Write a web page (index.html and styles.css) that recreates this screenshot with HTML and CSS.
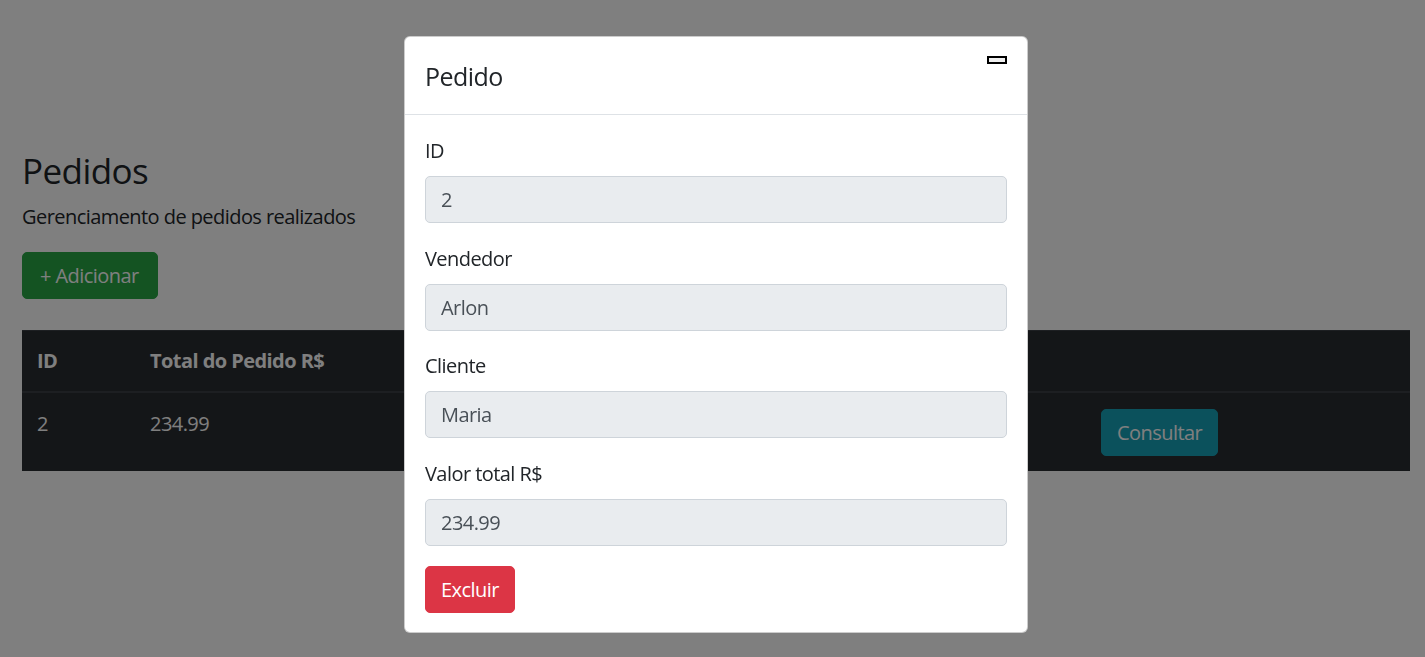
FILE: index.html
```html
<!DOCTYPE html>
<html lang="pt-BR">
<head>
<meta charset="utf-8">
<title>Pedidos</title>
<link rel="stylesheet" href="styles.css">
</head>
<body>
<main class="page">
  <h3 class="page-title">Pedidos</h3>
  <p class="page-sub">Gerenciamento de pedidos realizados</p>
  <div class="actions">
    <button class="btn btn-success" type="button">+ Adicionar</button>
  </div>
  <table class="orders">
    <thead>
      <tr>
        <th class="col-id">ID</th>
        <th class="col-total">Total do Pedido R$</th>
        <th class="col-vend"></th>
        <th class="col-cli"></th>
        <th class="col-act"></th>
      </tr>
    </thead>
    <tbody>
      <tr>
        <td>2</td>
        <td>234.99</td>
        <td></td>
        <td></td>
        <td><button class="btn btn-info" type="button">Consultar</button></td>
      </tr>
    </tbody>
  </table>
</main>

<div class="backdrop"></div>

<div class="modal">
  <div class="modal-content">
    <div class="modal-header">
      <h5 class="modal-title">Pedido</h5>
      <button class="close-box" type="button" aria-label="Fechar"></button>
    </div>
    <div class="modal-body">
      <div class="field">
        <label class="field-label">ID</label>
        <input class="form-control" type="text" value="2" readonly>
      </div>
      <div class="field">
        <label class="field-label">Vendedor</label>
        <input class="form-control" type="text" value="Arlon" readonly>
      </div>
      <div class="field">
        <label class="field-label">Cliente</label>
        <input class="form-control" type="text" value="Maria" readonly>
      </div>
      <div class="field">
        <label class="field-label">Valor total R$</label>
        <input class="form-control" type="text" value="234.99" readonly>
      </div>
      <button class="btn btn-danger" type="button">Excluir</button>
    </div>
  </div>
</div>
</body>
</html>
```

FILE: styles.css
```css
* { box-sizing: border-box; }

html, body {
  margin: 0;
  padding: 0;
}

body {
  font-family: "Open Sans", "Noto Sans", sans-serif;
  font-size: 20px;
  line-height: 1.5;
  letter-spacing: -0.028em;
  color: #212529;
  background: #fff;
  width: 1425px;
  height: 657px;
  overflow: hidden;
}

.page {
  padding: 150px 15px 0 22px;
}

.page-title {
  margin: 0 0 10px;
  font-size: 35px;
  font-weight: 500;
  line-height: 42px;
}

.page-sub {
  margin: 0 0 20px;
}

.actions {
  margin-bottom: 31px;
}

.btn {
  display: inline-block;
  font-family: inherit;
  font-size: 20px;
  letter-spacing: inherit;
  line-height: 30px;
  height: 47px;
  padding: 7.5px 15px;
  border: 1px solid transparent;
  border-radius: 5px;
  color: #fff;
  cursor: pointer;
}

.btn-success {
  background: #28a745;
  border-color: #28a745;
  padding-left: 17px;
  padding-right: 18px;
}
.btn-info { background: #17a2b8; border-color: #17a2b8; }
.btn-danger { background: #dc3545; border-color: #dc3545; }

.orders {
  width: 1388px;
  border-collapse: collapse;
  background: #292c30;
  color: #fff;
  table-layout: fixed;
}

.orders th,
.orders td {
  padding: 15px;
  text-align: left;
  vertical-align: top;
  border-top: 1px solid #3a3f45;
}

.orders td {
  padding-top: 16px;
}

.orders th {
  font-weight: 700;
  border-bottom: 2px solid #3a3f45;
}

.col-id { width: 113px; }
.col-total { width: 320px; }
.col-vend { width: 320px; }
.col-cli { width: 311px; }
.col-act { width: 324px; }

.backdrop {
  position: fixed;
  inset: 0;
  background: rgba(0, 0, 0, 0.5);
}

.modal {
  position: fixed;
  inset: 0;
  padding: 36px 0 0 404px;
}

.modal-content {
  width: 624px;
  background: #fff;
  border: 1px solid rgba(0, 0, 0, 0.2);
  border-radius: 6px;
}

.modal-header {
  display: flex;
  justify-content: space-between;
  align-items: flex-start;
  padding: 21px 20px 18.5px;
  border-bottom: 1px solid #dee2e6;
}

.modal-title {
  margin: 0;
  font-size: 25px;
  font-weight: 500;
  line-height: 1.5;
}

.close-box {
  width: 20px;
  height: 8px;
  padding: 0;
  margin: -2px 0 0 0;
  border: 2px solid #000;
  background: #efefef;
  border-radius: 0;
}

.modal-body {
  padding: 21px 20px 19px;
}

.field {
  margin-bottom: 20.5px;
}

.field-label {
  display: block;
  margin-bottom: 10px;
}

.form-control {
  display: block;
  width: 100%;
  height: 47px;
  padding: 7.5px 15px;
  font-family: inherit;
  font-size: 20px;
  letter-spacing: inherit;
  line-height: 30px;
  color: #495057;
  background: #e9ecef;
  border: 1px solid #ced4da;
  border-radius: 5px;
}
```
